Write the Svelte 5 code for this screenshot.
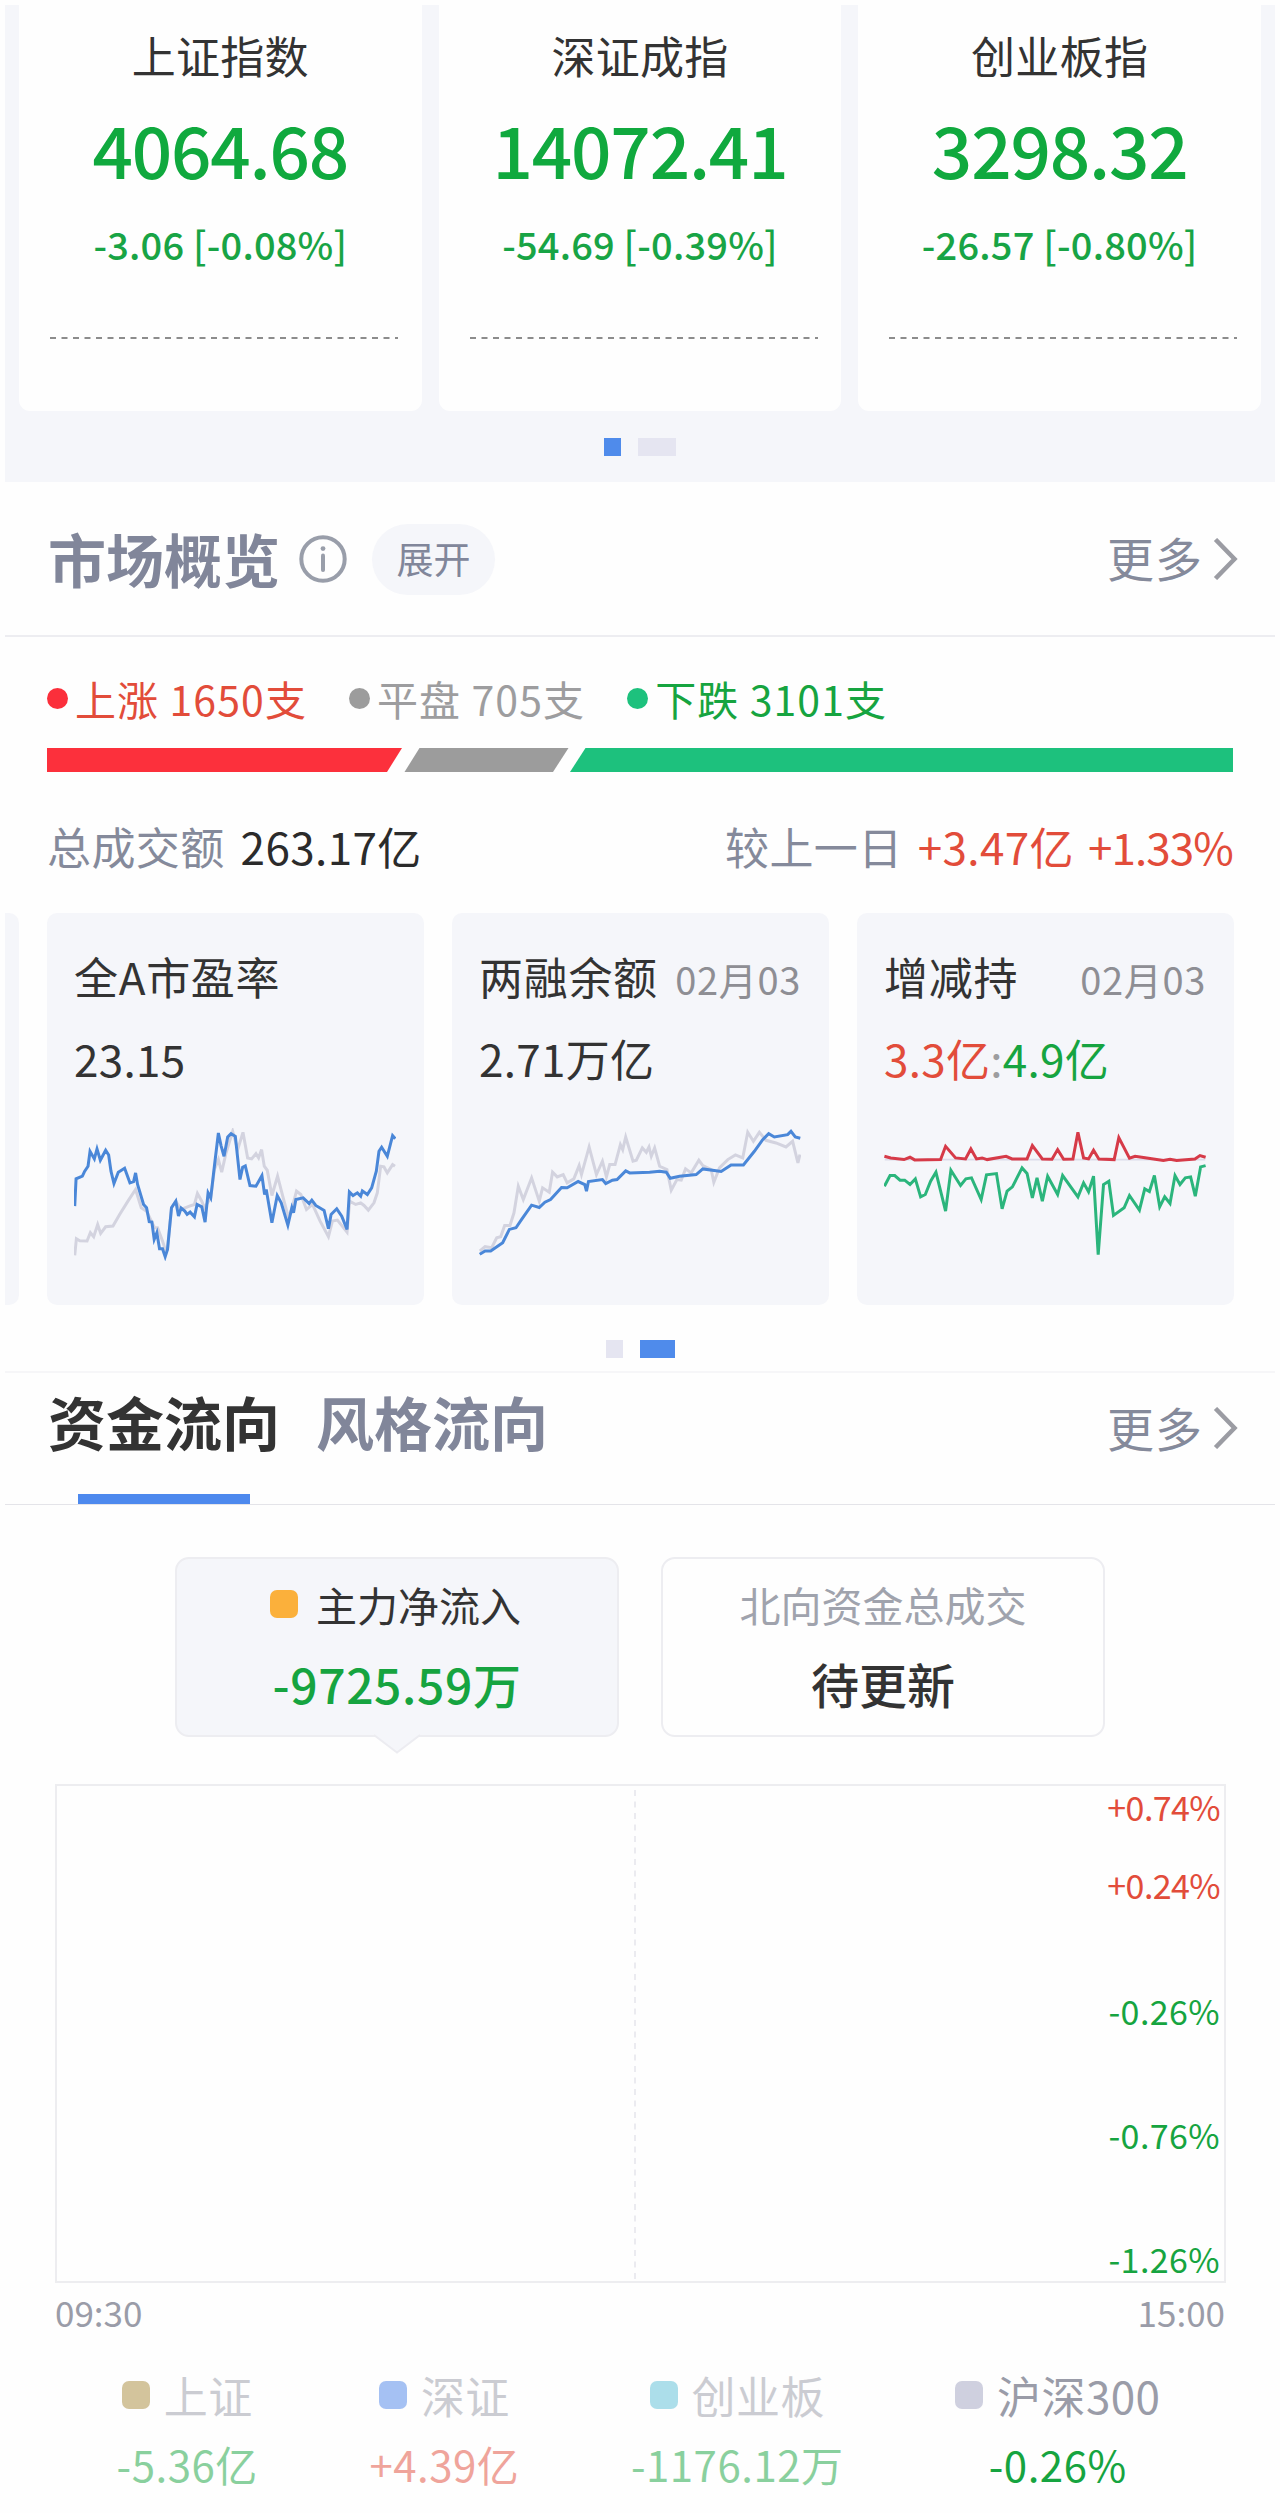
<script lang="ts">
  type Tone = 'up' | 'down' | 'flat'

  const indices = [
    { name: '上证指数', value: '4064.68', change: '-3.06 [-0.08%]' },
    { name: '深证成指', value: '14072.41', change: '-54.69 [-0.39%]' },
    { name: '创业板指', value: '3298.32', change: '-26.57 [-0.80%]' },
  ]

  const breadth: { label: string; tone: Tone }[] = [
    { label: '上涨 1650支', tone: 'up' },
    { label: '平盘 705支', tone: 'flat' },
    { label: '下跌 3101支', tone: 'down' },
  ]

  const metrics: {
    name: string
    date?: string
    value: { text: string; tone?: Tone }[]
    viewBox: string
    lines: { kind: string; points: string }[]
  }[] = [
    {
      name: '全A市盈率',
      value: [{ text: '23.15' }],
      viewBox: '225 685 964 400',
      lines: [
        {
          kind: 'muted',
          points:
            '225,1068 230,1018 240,1024 262,1025 272,1000 282,1012 294,975 303,1002 318,982 340,980 360,945 385,905 408,870 425,925 441,935 465,985 474,985 489,1025 497,1050 504,1050 516,925 529,905 545,930 570,920 585,915 594,882 607,905 615,925 634,895 645,810 657,780 667,818 680,760 700,695 715,750 731,698 745,775 757,778 770,762 778,775 787,750 795,800 804,812 818,888 835,830 850,888 868,955 880,920 892,875 905,885 922,930 940,915 963,965 988,1012 1000,965 1015,962 1044,998 1052,905 1070,915 1085,910 1095,918 1108,932 1125,910 1135,880 1145,800 1155,802 1165,820 1181,795 1188,800',
        },
        {
          kind: 'blue',
          points:
            '225,920 229,838 248,830 255,815 265,800 271,755 284,778 292,748 302,782 318,752 327,766 334,815 343,852 356,818 375,806 391,850 402,846 408,820 414,855 432,915 441,925 449,967 457,968 464,1020 472,1000 480,1048 489,1048 497,1072 504,1050 516,925 529,905 537,950 545,926 556,935 563,945 572,938 585,952 593,915 607,922 617,968 626,880 634,895 645,800 657,700 665,738 674,770 685,712 695,702 708,710 722,840 730,803 738,799 752,858 770,860 788,828 796,885 801,870 818,970 834,888 846,910 866,977 878,925 883,940 890,900 912,895 930,912 938,902 950,918 975,933 988,988 996,945 1013,928 1028,950 1044,990 1051,877 1062,888 1075,880 1085,890 1090,874 1105,885 1118,865 1132,815 1140,755 1148,743 1165,770 1181,708 1189,717',
        },
      ],
    },
    {
      name: '两融余额',
      date: '02月03',
      value: [{ text: '2.71万亿' }],
      viewBox: '149 685 964 400',
      lines: [
        {
          kind: 'muted',
          points:
            '149,1055 165,1042 185,1045 200,1015 212,1012 224,978 240,978 252,940 265,860 280,900 305,835 328,905 338,865 358,878 368,818 382,832 400,825 412,850 432,838 448,798 455,825 478,742 500,825 518,785 530,832 540,795 556,795 572,735 579,750 588,712 610,785 620,782 638,745 650,758 658,742 665,770 675,745 690,800 712,810 725,872 742,840 755,842 768,808 785,820 808,782 820,798 845,810 853,848 870,805 895,780 918,766 940,775 955,698 972,725 990,698 1010,722 1040,730 1070,742 1090,725 1106,790 1112,765',
        },
        {
          kind: 'blue',
          points:
            '149,1065 165,1055 182,1055 218,1030 238,990 258,985 275,960 305,917 328,924 345,908 362,900 395,864 412,865 445,846 465,855 470,875 476,846 518,840 528,852 548,842 562,840 588,814 600,820 660,818 690,815 710,818 722,836 750,830 800,825 820,808 875,816 905,796 942,796 975,755 1000,720 1018,702 1035,712 1075,705 1085,695 1098,712 1113,716',
        },
      ],
    },
    {
      name: '增减持',
      date: '02月03',
      value: [
        { text: '3.3亿', tone: 'up' },
        { text: ':', tone: 'flat' },
        { text: '4.9亿', tone: 'down' },
      ],
      viewBox: '132 685 964 400',
      lines: [
        { kind: 'base', points: '132,780 1096,780' },
        {
          kind: 'green',
          points:
            '131,860 148,828 162,828 178,842 192,842 208,855 224,838 240,892 254,885 270,845 286,818 315,935 331,812 360,858 376,838 393,835 422,900 438,826 468,822 485,928 500,875 516,862 545,805 560,822 576,895 590,835 606,905 622,830 652,885 667,828 713,892 730,850 745,877 760,830 774,1066 790,855 806,845 820,948 852,925 868,888 898,932 914,868 928,876 943,828 959,922 974,892 990,912 1005,828 1020,855 1036,835 1052,832 1066,890 1082,802 1097,798',
        },
        {
          kind: 'red',
          points:
            '131,770 150,775 190,780 208,773 222,781 300,780 315,740 345,775 375,778 391,748 408,778 425,775 440,780 497,770 515,778 560,778 576,738 606,778 635,779 652,750 670,779 698,778 713,698 730,775 745,778 760,752 776,778 822,780 836,714 868,776 885,770 910,774 970,783 990,779 1010,783 1065,778 1080,768 1097,773',
        },
      ],
    },
  ]

  // y is the centre of the label inside the plot
  const ticks: { label: string; y: number; tone: Tone }[] = [
    { label: '+0.74%', y: 21, tone: 'up' },
    { label: '+0.24%', y: 99, tone: 'up' },
    { label: '-0.26%', y: 225, tone: 'down' },
    { label: '-0.76%', y: 349, tone: 'down' },
    { label: '-1.26%', y: 473, tone: 'down' },
  ]

  const series: { name: string; value: string; tone: Tone; swatch: string; active: boolean }[] = [
    { name: '上证', value: '-5.36亿', tone: 'down', swatch: 'sand', active: false },
    { name: '深证', value: '+4.39亿', tone: 'up', swatch: 'blue', active: false },
    { name: '创业板', value: '-1176.12万', tone: 'down', swatch: 'cyan', active: false },
    { name: '沪深300', value: '-0.26%', tone: 'down', swatch: 'grey', active: true },
  ]
</script>

{#snippet more()}
  <a class="more" href="#more">
    <span class="more__text">更多</span>
    <svg class="more__arrow" viewBox="0 0 25 42" aria-hidden="true">
      <path d="M2.5 1.5 L21.5 21 L2.5 40.5" />
    </svg>
  </a>
{/snippet}

<main class="page">
  <section class="indices">
    <div class="indices__grid">
      {#each indices as item}
        <article class="index">
          <h3 class="index__name">{item.name}</h3>
          <div class="index__value">{item.value}</div>
          <div class="index__change">{item.change}</div>
          <svg class="index__line" viewBox="0 0 348 2" aria-hidden="true">
            <path d="M0 1 H348" />
          </svg>
        </article>
      {/each}
    </div>
    <div class="pager pager--top">
      <i class="pager__dot pager__dot--on"></i>
      <i class="pager__dot pager__dot--wide"></i>
    </div>
  </section>

  <section class="market">
    <header class="bar">
      <h2 class="bar__title">市场概览</h2>
      <svg class="bar__info" viewBox="0 0 48 48" aria-hidden="true">
        <circle cx="24" cy="24" r="21.7" />
        <path d="M24 20.5 V35" />
        <circle class="bar__info-dot" cx="24" cy="13.6" r="2.4" />
      </svg>
      <button class="bar__expand" type="button">展开</button>
      {@render more()}
    </header>

    <div class="market__body">
      <ul class="breadth">
        {#each breadth as item}
          <li class="breadth__item {item.tone}">
            <i class="breadth__dot breadth__dot--{item.tone}"></i>{item.label}
          </li>
        {/each}
      </ul>
      <svg class="ratio" viewBox="0 0 1186 24" aria-hidden="true">
        <polygon class="ratio__up" points="0,0 355,0 340,24 0,24" />
        <polygon class="ratio__flat" points="372.5,0 521.5,0 506,24 357.5,24" />
        <polygon class="ratio__down" points="538.5,0 1186,0 1186,24 523,24" />
      </svg>
      <div class="turnover">
        <span class="turnover__label">总成交额</span>
        <span class="turnover__value">263.17亿</span>
        <span class="turnover__label turnover__label--right">较上一日</span>
        <span class="turnover__delta">+3.47亿</span>
        <span class="turnover__delta turnover__delta--last">+1.33%</span>
      </div>
    </div>

    <div class="metrics">
      <div class="metrics__peek"></div>
      {#each metrics as metric}
        <article class="metric">
          <header class="metric__head">
            <h3 class="metric__name">{metric.name}</h3>
            {#if metric.date}<time class="metric__date">{metric.date}</time>{/if}
          </header>
          <div class="metric__value">
            {#each metric.value as part}<span class={part.tone}>{part.text}</span>{/each}
          </div>
          <svg class="metric__chart" viewBox={metric.viewBox} aria-hidden="true">
            {#each metric.lines as line}
              <polyline class="line line--{line.kind}" points={line.points} />
            {/each}
          </svg>
        </article>
      {/each}
    </div>
    <div class="pager pager--market">
      <i class="pager__dot"></i>
      <i class="pager__dot pager__dot--wide pager__dot--on"></i>
    </div>
  </section>

  <section class="flow">
    <header class="tabs">
      <button class="tabs__item tabs__item--active" type="button">资金流向</button>
      <button class="tabs__item" type="button">风格流向</button>
      {@render more()}
    </header>

    <div class="choices">
      <div class="choice choice--active">
        <div class="choice__name"><i class="swatch swatch--orange"></i>主力净流入</div>
        <div class="choice__value down">-9725.59万</div>
        <svg class="choice__tip" viewBox="0 0 46 20" aria-hidden="true">
          <path d="M0 1 L23 18.5 L46 1" />
        </svg>
      </div>
      <div class="choice">
        <div class="choice__name">北向资金总成交</div>
        <div class="choice__value choice__value--pending">待更新</div>
      </div>
    </div>

    <div class="plot">
      <svg class="plot__mid" viewBox="0 0 2 495" aria-hidden="true">
        <path d="M1 4 V495" />
      </svg>
      {#each ticks as tick}
        <span class="plot__tick {tick.tone}" style:top="{tick.y}px">{tick.label}</span>
      {/each}
    </div>
    <div class="times"><span>09:30</span><span>15:00</span></div>

    <ul class="series">
      {#each series as item}
        <li class="series__item" class:series__item--off={!item.active}>
          <div class="series__name"><i class="swatch swatch--{item.swatch}"></i>{item.name}</div>
          <div class="series__value {item.tone}">{item.value}</div>
        </li>
      {/each}
    </ul>
  </section>
</main>

<style>
  :global(body) {
    background: #fefefe;
  }

  .page {
    box-sizing: border-box;
    width: 1280px;
    height: 2513px;
    padding: 5px;
    overflow: hidden;
    background: #fefefe;
    color: #333;
    font-family: 'Noto Sans CJK SC', sans-serif;
    font-size: 44px;
    line-height: 60px;
    white-space: nowrap;
  }

  h2,
  h3,
  ul {
    margin: 0;
    padding: 0;
    font: inherit;
    list-style: none;
  }

  button {
    padding: 0;
    border: 0;
    background: none;
    color: inherit;
    font: inherit;
  }

  svg {
    display: block;
    fill: none;
  }

  .up {
    color: #e24c3a;
  }

  .down {
    color: #16a440;
  }

  .flat {
    color: #9d9d9f;
  }

  /* index cards */
  .indices {
    box-sizing: border-box;
    height: 477px;
    padding: 0 14px;
    background: #f5f6fa;
  }

  .indices__grid {
    display: grid;
    grid-template-columns: repeat(3, 1fr);
    gap: 17px;
  }

  .index {
    box-sizing: border-box;
    height: 406px;
    padding-top: 20px;
    border-radius: 0 0 11px 11px;
    background: #fefefe;
    text-align: center;
  }

  .index__name {
    letter-spacing: 0.3px;
  }

  .index__value {
    margin-top: 23px;
    color: #10a93e;
    font-size: 71px;
    font-weight: 500;
    letter-spacing: -1.2px;
    line-height: 80px;
  }

  .index__change {
    margin-top: 31px;
    color: #18a445;
    font-size: 38px;
    font-weight: 500;
    letter-spacing: 0.2px;
    line-height: 50px;
  }

  .index__line {
    width: 348px;
    height: 2px;
    margin: 68px 0 0 31px;
    stroke: #8c8c8c;
    stroke-width: 2;
    stroke-dasharray: 6 5.5;
  }

  .pager {
    display: flex;
    gap: 17px;
    justify-content: center;
  }

  .pager--top {
    margin-top: 27px;
  }

  .pager--market {
    margin-top: 35px;
  }

  .pager__dot {
    width: 17px;
    height: 18px;
    background: #e5e5f1;
  }

  .pager__dot--wide {
    width: 35px;
  }

  .pager--top .pager__dot--wide {
    width: 38px;
  }

  .pager__dot--on {
    background: #4f8beb;
  }

  /* market overview */
  .bar {
    display: flex;
    align-items: center;
    height: 153px;
    padding: 0 37px 0 43px;
    border-bottom: 2px solid #ededf1;
    color: #81869a;
  }

  .bar__title {
    margin-top: -2px;
    font-size: 58px;
    font-weight: 700;
    line-height: 80px;
  }

  .bar__info {
    width: 48px;
    height: 48px;
    margin-left: 19px;
    stroke: #999eaa;
    stroke-width: 4;
    stroke-linecap: round;
  }

  .bar__info-dot {
    fill: #999eaa;
    stroke: none;
  }

  .bar__expand {
    width: 123px;
    height: 71px;
    margin: 1px 0 0 25px;
    padding-bottom: 2px;
    border-radius: 36px;
    background: #f5f6fa;
    font-size: 37px;
    line-height: 66px;
  }

  .more {
    display: flex;
    align-items: center;
    gap: 10px;
    margin-left: auto;
    color: #858a9b;
    text-decoration: none;
  }

  .more__text {
    padding-bottom: 4px;
    font-size: 47px;
    letter-spacing: 1px;
  }

  .more__arrow {
    width: 25px;
    height: 42px;
    stroke: #9b9ca3;
    stroke-width: 4.5;
  }

  .market__body {
    padding: 31px 42px 0;
  }

  .breadth {
    display: flex;
    gap: 42px;
    font-size: 41px;
    letter-spacing: 1.1px;
  }

  .breadth__item {
    display: flex;
    align-items: center;
  }

  .breadth__dot {
    width: 21px;
    height: 21px;
    margin-right: 7px;
    border-radius: 50%;
  }

  .breadth__dot--up {
    background: #fb2f3b;
  }

  .breadth__dot--flat {
    background: #9c9c9c;
  }

  .breadth__dot--down {
    background: #1dc17d;
  }

  .ratio {
    width: 1186px;
    height: 24px;
    margin-top: 20px;
  }

  .ratio__up {
    fill: #fc303c;
  }

  .ratio__flat {
    fill: #9c9c9c;
  }

  .ratio__down {
    fill: #1dc17d;
  }

  .turnover {
    display: flex;
    margin-top: 44px;
    letter-spacing: 0.4px;
  }

  .turnover__label {
    color: #858a9b;
  }

  .turnover__label--right {
    margin-left: auto;
  }

  .turnover__value {
    margin-left: 16px;
    color: #2b2b2b;
  }

  .turnover__delta {
    margin-left: 15px;
    color: #e24c3a;
  }

  .turnover__delta--last {
    margin-left: 14px;
    letter-spacing: -0.9px;
  }

  .metrics {
    display: grid;
    grid-template-columns: 14px repeat(3, 1fr);
    gap: 28px;
    margin: 37px 42px 0 0;
  }

  .metrics__peek {
    border-radius: 0 10px 10px 0;
    background: #f5f6fa;
  }

  .metric {
    box-sizing: border-box;
    height: 392px;
    padding: 33px 28px 0 27px;
    border-radius: 10px;
    background: #f5f6fa;
  }

  .metric__head {
    display: flex;
    justify-content: space-between;
    height: 60px;
    letter-spacing: 0.7px;
  }

  .metric__date {
    color: #8e8e94;
    font-size: 38px;
    line-height: 65px;
  }

  .metric__value {
    margin-top: 22px;
    letter-spacing: 0.3px;
  }

  .metric__chart {
    width: 322px;
    height: 133px;
    margin-top: 40px;
  }

  .line {
    stroke-width: 9;
    stroke-linejoin: miter;
  }

  .line--muted {
    stroke: #d3d3df;
  }

  .line--blue {
    stroke: #4a87d8;
  }

  .line--red {
    stroke: #d63a48;
  }

  .line--green {
    stroke: #2bb57c;
  }

  .line--base {
    stroke: #dcdcea;
    stroke-width: 5;
  }

  /* fund flow */
  .flow {
    margin-top: 13px;
    border-top: 2px solid #f6f6f8;
  }

  .tabs {
    display: flex;
    gap: 36px;
    height: 131px;
    padding: 0 37px 0 43px;
    border-bottom: 1px solid #e4e4e9;
  }

  .tabs__item {
    position: relative;
    height: 131px;
    padding-bottom: 36px;
    color: #81869a;
    font-size: 58px;
    font-weight: 700;
    line-height: 94px;
  }

  .tabs__item--active {
    color: #333;
  }

  .tabs__item--active::after {
    content: '';
    position: absolute;
    bottom: 0;
    left: 30px;
    width: 172px;
    height: 10px;
    background: #4d89ee;
  }

  .tabs .more {
    height: 110px;
  }

  .tabs .more__text {
    padding-bottom: 3px;
  }

  .choices {
    display: flex;
    gap: 42px;
    justify-content: center;
    margin-top: 52px;
  }

  .choice {
    position: relative;
    box-sizing: border-box;
    width: 444px;
    height: 180px;
    padding-top: 15px;
    border: 2px solid #ededf1;
    border-radius: 14px;
    color: #a0a3ad;
    text-align: center;
  }

  .choice--active {
    background: #f5f6fa;
    color: #333;
  }

  .choice__name {
    display: flex;
    align-items: center;
    justify-content: center;
    font-size: 41px;
  }

  .choice__value {
    margin-top: 19px;
    font-size: 48px;
    font-weight: 500;
    letter-spacing: 0.6px;
  }

  .choice__value--pending {
    color: #333;
    letter-spacing: 0;
  }

  .choice__tip {
    position: absolute;
    top: 175px;
    left: 197px;
    width: 46px;
    height: 20px;
    fill: #f5f6fa;
    stroke: #ececf1;
    stroke-width: 2;
  }

  .swatch {
    width: 28px;
    height: 28px;
    margin-right: 14px;
    border-radius: 7px;
  }

  .swatch--orange {
    margin: 0 18px 0 -3px;
    background: #fbb03b;
  }

  .swatch--sand {
    background: #a98b3c;
  }

  .swatch--blue {
    background: #4f86ea;
  }

  .swatch--cyan {
    background: #5cc0d8;
  }

  .swatch--grey {
    background: #cfd0df;
  }

  .plot {
    position: relative;
    box-sizing: border-box;
    height: 499px;
    margin: 47px 49px 0 50px;
    border: 2px solid #ededf0;
  }

  .plot__mid {
    width: 2px;
    height: 495px;
    margin-left: 577px;
    stroke: #ebebf0;
    stroke-width: 2;
    stroke-dasharray: 6 5.5;
  }

  .plot__tick {
    position: absolute;
    right: 4px;
    font-size: 34px;
    letter-spacing: -0.6px;
    transform: translateY(-50%);
  }

  .plot__tick.down {
    letter-spacing: 0.4px;
  }

  .times {
    display: flex;
    justify-content: space-between;
    margin: 4px 50px 0;
    color: #9a9ca8;
    font-size: 35px;
    line-height: 50px;
  }

  .series {
    display: flex;
    justify-content: space-evenly;
    margin: 33px 3px 0 0;
    line-height: 50px;
    text-align: center;
  }

  .series__item--off {
    opacity: 0.5;
  }

  .series__name {
    display: flex;
    align-items: center;
    justify-content: center;
    color: #9a9ca8;
    letter-spacing: 0.4px;
  }

  .series__value {
    margin-top: 19px;
    font-size: 42px;
    letter-spacing: 0.5px;
  }
</style>
